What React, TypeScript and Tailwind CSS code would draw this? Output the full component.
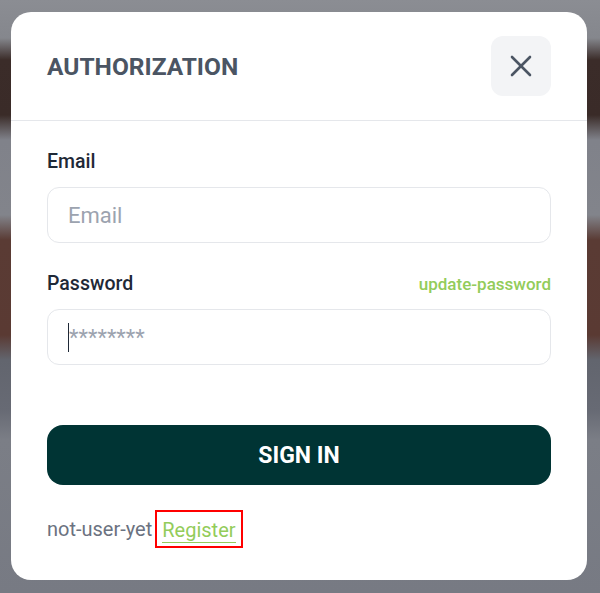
import { useState } from 'react';

// Blurred page behind the dialog, approximated with soft horizontal bands.
const backdrop =
  'bg-[linear-gradient(to_bottom,#8b8d93_0px,#85878d_38px,#3b2c29_60px,#3a2b28_115px,#80828a_140px,#82848b_215px,#5a3b34_240px,#5a3a33_335px,#62656e_360px,#676a74_410px,#7b7e86_440px,#777a83_593px)]';

function CloseIcon() {
  return (
    <svg width="22" height="22" viewBox="0 0 22 22" fill="none" stroke="#4b5563" strokeWidth="2.6" strokeLinecap="round">
      <path d="M2 2 20 20" />
      <path d="M20 2 2 20" />
    </svg>
  );
}

export default function App() {
  const [email, setEmail] = useState('');
  const [password, setPassword] = useState('');

  return (
    <div className={`min-h-[593px] w-full pt-3 ${backdrop} font-['Roboto',sans-serif]`}>
      <div className="ml-[11px] w-[576px] h-[568px] rounded-[20px] bg-white flex flex-col">
        <div className="flex items-center justify-between px-9 pt-6 pb-6 border-b border-[#e5e7eb]">
          <h2 className="pt-[2px] text-[24.5px] font-bold uppercase text-[#4b5563] leading-none">Authorization</h2>
          <button className="w-[60px] h-[60px] rounded-xl bg-[#f3f4f6] flex items-center justify-center">
            <CloseIcon />
          </button>
        </div>

        <form className="px-9 pt-[29px] flex flex-col" onSubmit={(e) => e.preventDefault()}>
          <label className="text-[19.5px] font-medium text-[#1f2937] leading-[24px]">Email</label>
          <input
            value={email}
            onChange={(e) => setEmail(e.target.value)}
            placeholder="Email"
            className="mt-[13px] h-14 w-full rounded-xl border border-[#e5e7eb] px-5 text-[22px] text-[#111827] placeholder:text-[#9ca3af] outline-none"
          />

          <div className="mt-[29px] flex items-center justify-between leading-[24px]">
            <label className="text-[19.5px] font-medium text-[#1f2937]">Password</label>
            <a href="#" className="text-[17px] font-medium text-[#93cc5a]">update-password</a>
          </div>
          <div className="mt-[13px] h-14 w-full rounded-xl border border-[#e5e7eb] px-5 flex items-center">
            <span className="w-px h-[29px] bg-[#1f2937]" />
            <input
              type="password"
              value={password}
              onChange={(e) => setPassword(e.target.value)}
              placeholder="********"
              className="flex-1 h-full text-[22px] text-[#111827] placeholder:text-[#9ca3af] outline-none"
            />
          </div>

          <button className="mt-[60px] h-[60px] w-full rounded-2xl bg-[#003434] pt-[3px] text-white text-[23px] font-bold uppercase">
            Sign in
          </button>

          <div className="mt-[25px] flex items-center text-[20px] text-[#6b7280]">
            <span>not-user-yet</span>
            <span className="ml-[3px] border-2 border-[#ff0000] px-[5px] pt-[2px] h-[38px] flex items-center">
              <a href="#" className="text-[#93cc5a] border-b-[1.5px] border-[#93cc5a] leading-[24px]">Register</a>
            </span>
          </div>
        </form>
      </div>
    </div>
  );
}
